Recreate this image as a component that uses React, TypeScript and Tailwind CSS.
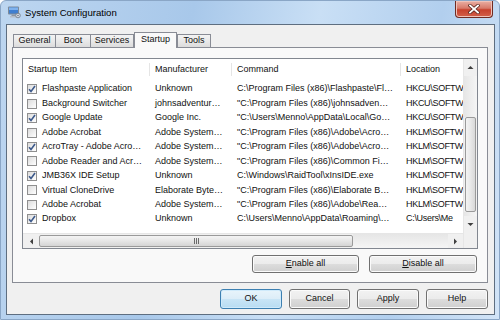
import React from 'react';

type Row = { on: boolean; item: string; maker: string; cmd: string; loc: string };

const rows: Row[] = [
  { on: true, item: 'Flashpaste Application', maker: 'Unknown', cmd: 'C:\\Program Files (x86)\\Flashpaste\\Fl…', loc: 'HKCU\\SOFTW' },
  { on: false, item: 'Background Switcher', maker: 'johnsadventur…', cmd: '"C:\\Program Files (x86)\\johnsadven…', loc: 'HKCU\\SOFTW' },
  { on: true, item: 'Google Update', maker: 'Google Inc.', cmd: '"C:\\Users\\Menno\\AppData\\Local\\Go…', loc: 'HKCU\\SOFTW' },
  { on: false, item: 'Adobe Acrobat', maker: 'Adobe System…', cmd: '"C:\\Program Files (x86)\\Adobe\\Acro…', loc: 'HKLM\\SOFTW' },
  { on: true, item: 'AcroTray - Adobe Acro…', maker: 'Adobe System…', cmd: '"C:\\Program Files (x86)\\Adobe\\Acro…', loc: 'HKLM\\SOFTW' },
  { on: false, item: 'Adobe Reader and Acr…', maker: 'Adobe System…', cmd: '"C:\\Program Files (x86)\\Common Fi…', loc: 'HKLM\\SOFTW' },
  { on: true, item: 'JMB36X IDE Setup', maker: 'Unknown', cmd: 'C:\\Windows\\RaidTool\\xInsIDE.exe', loc: 'HKLM\\SOFTW' },
  { on: false, item: 'Virtual CloneDrive', maker: 'Elaborate Byte…', cmd: '"C:\\Program Files (x86)\\Elaborate B…', loc: 'HKLM\\SOFTW' },
  { on: false, item: 'Adobe Acrobat', maker: 'Adobe System…', cmd: '"C:\\Program Files (x86)\\Adobe\\Rea…', loc: 'HKLM\\SOFTW' },
  { on: true, item: 'Dropbox', maker: 'Unknown', cmd: 'C:\\Users\\Menno\\AppData\\Roaming\\…', loc: 'C:\\Users\\Me' },
];

const tabs = [
  { label: 'General', w: 'w-[43px]' },
  { label: 'Boot', w: 'w-[35px]' },
  { label: 'Services', w: 'w-[43px]' },
  { label: 'Startup', w: 'w-[43px]' },
  { label: 'Tools', w: 'w-[34px]' },
];

function Check({ on }: { on: boolean }) {
  return (
    <div className="flex h-[10px] w-[10px] shrink-0 items-center justify-center border border-[#8f8f8f] bg-[linear-gradient(135deg,#dcdcdc,#ffffff)]">
      {on && (
        <svg width="8" height="8" viewBox="0 0 8 8">
          <path d="M1 4.2 L3 6.4 L7 1" fill="none" stroke="#3d5a8c" strokeWidth="1.6" />
        </svg>
      )}
    </div>
  );
}

function Arrow({ dir }: { dir: 'up' | 'down' | 'left' | 'right' }) {
  const d = {
    up: 'M0.5 4 L3.5 1 L6.5 4 Z',
    down: 'M0.5 1 L3.5 4 L6.5 1 Z',
    left: 'M4 0.5 L1 3.5 L4 6.5 Z',
    right: 'M1 0.5 L4 3.5 L1 6.5 Z',
  }[dir];
  const vert = dir === 'up' || dir === 'down';
  return (
    <svg width={vert ? 7 : 5} height={vert ? 5 : 7} viewBox={vert ? '0 0 7 5' : '0 0 5 7'}>
      <path d={d} fill="#3f3f3f" />
    </svg>
  );
}

function Btn({ label, u, w, def }: { label: string; u?: number; w: string; def?: boolean }) {
  const text =
    u === undefined ? (
      label
    ) : (
      <>
        <span className="underline">{label[u]}</span>
        {label.slice(u + 1)}
      </>
    );
  return (
    <div
      className={
        def
          ? `${w} flex h-full items-center justify-center rounded-[3px] border border-[#3c7fb1] bg-[linear-gradient(#e8f4fb,#dcedf8_50%,#c9e5f6_50%,#b8dcf2)] shadow-[inset_0_0_0_1px_#cfeafb]`
          : `${w} flex h-full items-center justify-center rounded-[3px] border border-[#707070] bg-[linear-gradient(#f2f2f2,#ebebeb_50%,#dddddd_50%,#cfcfcf)] shadow-[inset_0_0_0_1px_#fbfbfb]`
      }
    >
      <span>{text}</span>
    </div>
  );
}

function VScroll() {
  return (
    <div className="flex w-[14px] shrink-0 flex-col border-l border-[#e6e6e6] bg-[#f0f0f0]">
      <div className="flex h-[17px] items-center justify-center">
        <Arrow dir="up" />
      </div>
      <div className="h-[41px] bg-[linear-gradient(90deg,#e6e6e6,#f5f5f5)]" />
      <div className="mx-px h-[95px] rounded-[2px] border border-[#9a9a9a] bg-[linear-gradient(90deg,#f4f4f4,#e8e8e8_50%,#d8d8d8)]" />
      <div className="flex-1 bg-[linear-gradient(90deg,#e6e6e6,#f5f5f5)]" />
      <div className="flex h-[17px] items-center justify-center">
        <Arrow dir="down" />
      </div>
      <div className="h-[15px] bg-[#f0f0f0]" />
    </div>
  );
}

function HScroll() {
  return (
    <div className="flex h-[15px] shrink-0 items-stretch border-t border-[#e6e6e6] bg-[#f0f0f0]">
      <div className="flex w-[16px] items-center justify-center">
        <Arrow dir="left" />
      </div>
      <div className="my-px flex w-[314px] items-center justify-center rounded-[2px] border border-[#9a9a9a] bg-[linear-gradient(#f4f4f4,#e6e6e6_50%,#d4d4d4)]">
        <div className="flex gap-[1px]">
          <div className="h-[6px] w-px bg-[#6a6a6a]" />
          <div className="h-[6px] w-px bg-[#6a6a6a]" />
          <div className="h-[6px] w-px bg-[#6a6a6a]" />
        </div>
      </div>
      <div className="flex-1 bg-[linear-gradient(#e6e6e6,#f5f5f5)]" />
      <div className="flex w-[15px] items-center justify-center">
        <Arrow dir="right" />
      </div>
    </div>
  );
}

function AppIcon() {
  return (
    <svg width="14" height="14" viewBox="0 0 14 14">
      <rect x="1" y="1.5" width="11" height="8" rx="1" fill="#7d8a99" />
      <rect x="2" y="2.5" width="9" height="6" fill="#3f7fd0" />
      <rect x="2" y="2.5" width="9" height="2.5" fill="#7fb2ee" />
      <rect x="4.5" y="9.5" width="4" height="1.5" fill="#8c96a3" />
      <rect x="3" y="11" width="7" height="1.5" fill="#b4bcc6" />
      <circle cx="11" cy="10.5" r="2.3" fill="#d6dde6" stroke="#6b7684" strokeWidth="0.8" />
      <circle cx="11" cy="10.5" r="0.8" fill="#6b7684" />
    </svg>
  );
}

function CloseBtn() {
  return (
    <div className="mr-[2px] flex h-[17px] w-[38px] items-center justify-center rounded-b-[4px] border border-t-0 border-[#6f2b22] bg-[linear-gradient(#eab0a4,#d77a6a_45%,#c7412d_55%,#d2604a)] shadow-[inset_0_0_0_1px_#f0c2b8]">
      <svg width="12" height="10" viewBox="0 0 12 10">
        <path d="M2 1.5 L10 8.5 M10 1.5 L2 8.5" stroke="#5a2720" strokeWidth="3.4" strokeLinecap="square" />
        <path d="M2 1.5 L10 8.5 M10 1.5 L2 8.5" stroke="#ffffff" strokeWidth="1.8" strokeLinecap="square" />
      </svg>
    </div>
  );
}

export default function App() {
  return (
    <div className="flex h-[320px] w-[500px] flex-col overflow-hidden rounded-t-[6px] border border-[#8aa6c6] bg-[linear-gradient(100deg,#bdd6f0_0%,#a8c8ea_35%,#c9dff5_58%,#b2cfee_80%,#d2e4f7_100%)] pb-[5px] pl-[5px] pr-[4px] font-['Liberation_Sans',Arial,sans-serif] text-[9px] text-[#111]">
      {/* title bar */}
      <div className="flex h-[23px] shrink-0 items-start">
        <div className="ml-[1px] mt-[4px]">
          <AppIcon />
        </div>
        <div className="ml-[4px] mt-[5px] text-[9.6px] text-black">System Configuration</div>
        <div className="ml-auto">
          <CloseBtn />
        </div>
      </div>

      {/* client area */}
      <div className="flex flex-1 flex-col border border-[#5e6e80] bg-[#f0f0f0] pb-[5px] pl-[5px] pr-[6px] pt-[7px]">
        {/* tabs */}
        <div className="relative z-10 flex h-[15px] items-end pl-[1px]">
          {tabs.map((t) =>
            t.label === 'Startup' ? (
              <div
                key={t.label}
                className={`${t.w} -mb-px flex h-[16px] items-center justify-center border border-b-0 border-[#898c95] bg-[#f9f9f9] pb-[2px]`}
              >
                {t.label}
              </div>
            ) : (
              <div
                key={t.label}
                className={`${t.w} flex h-[13px] items-center justify-center border border-b-0 border-[#898c95] bg-[linear-gradient(#f3f3f3,#e9e9e9_50%,#dcdcdc)] [&+&]:border-l-0`}
              >
                {t.label}
              </div>
            )
          )}
        </div>

        {/* tab panel */}
        <div className="flex h-[236px] flex-col border border-[#898c95] bg-[#f9f9f9] px-[9px] pb-[9px] pt-[10px]">
          <div className="flex h-[191px] shrink-0 border border-[#828790] bg-white">
            <div className="flex min-w-0 flex-1 flex-col">
              <div className="flex h-[23px] shrink-0 items-center whitespace-nowrap pb-[2px]">
                <div className="w-[127px] shrink-0 border-r border-[#e5e5e5] pl-[5px]">Startup Item</div>
                <div className="w-[82px] shrink-0 border-r border-[#e5e5e5] pl-[5px]">Manufacturer</div>
                <div className="w-[169px] shrink-0 border-r border-[#e5e5e5] pl-[5px]">Command</div>
                <div className="min-w-0 flex-1 overflow-hidden pl-[5px]">Location</div>
              </div>
              {rows.map((r, i) => (
                <div key={i} className="flex h-[14.44px] shrink-0 items-center whitespace-nowrap">
                  <div className="flex w-[127px] shrink-0 items-center gap-[5px] overflow-hidden pl-[4px]">
                    <Check on={r.on} />
                    <span>{r.item}</span>
                  </div>
                  <div className="w-[82px] shrink-0 overflow-hidden pl-[5px]">{r.maker}</div>
                  <div className="w-[169px] shrink-0 overflow-hidden pl-[5px]">{r.cmd}</div>
                  <div className="min-w-0 flex-1 overflow-hidden pl-[5px] tracking-[-0.3px]">{r.loc}</div>
                </div>
              ))}
              <div className="flex-1" />
              <HScroll />
            </div>
            <VScroll />
          </div>

          <div className="mt-[6px] flex h-[18px] justify-end gap-[10px] pr-px">
            <Btn label="Enable all" u={0} w="w-[107px]" />
            <Btn label="Disable all" u={0} w="w-[108px]" />
          </div>
        </div>

        {/* dialog buttons */}
        <div className="mt-[6px] flex h-[20px] justify-end gap-[7px]">
          <Btn label="OK" w="w-[62px]" def />
          <Btn label="Cancel" w="w-[61px]" />
          <Btn label="Apply" w="w-[62px]" />
          <Btn label="Help" w="w-[62px]" />
        </div>
      </div>
    </div>
  );
}
